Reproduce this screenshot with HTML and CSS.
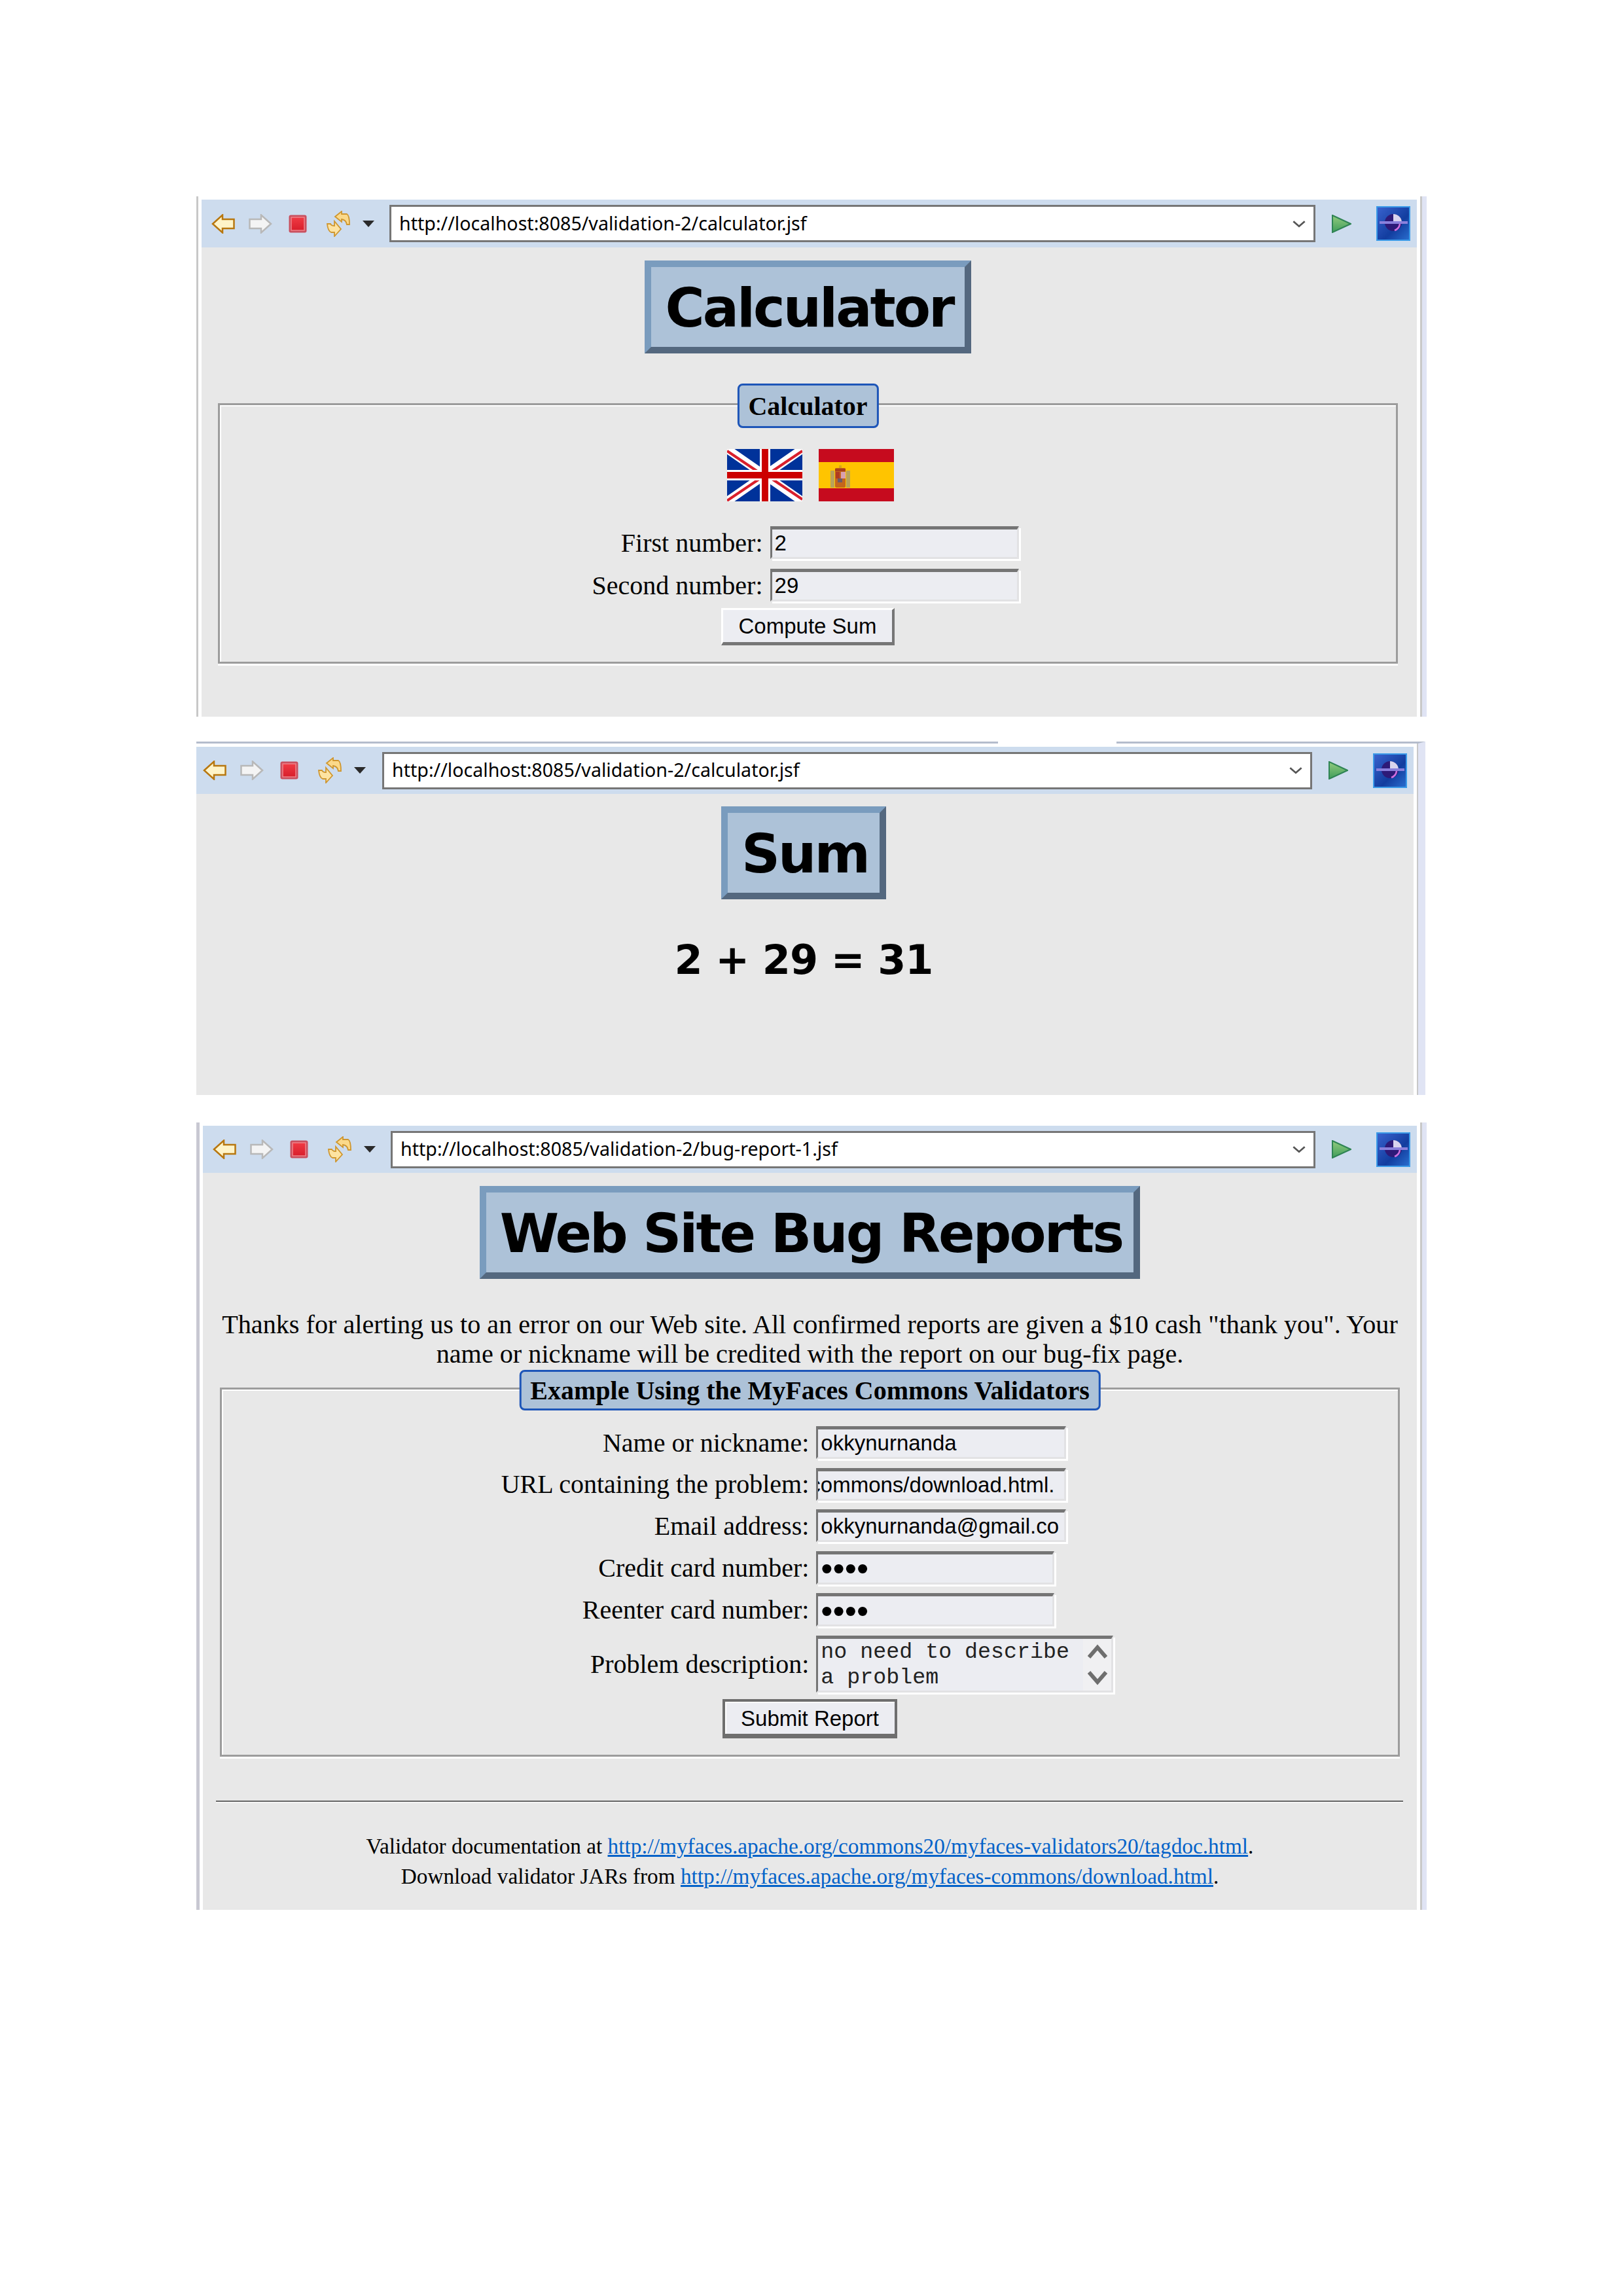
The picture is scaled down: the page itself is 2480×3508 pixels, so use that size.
FILE: index.html
```html
<!DOCTYPE html>
<html lang="en">
<head>
    <meta charset="UTF-8">
    <title>Validation screenshots</title>
    <link rel="stylesheet" href="styles.css">
</head>
<body>
    <svg class="defs" width="0" height="0">
        <defs>
            <linearGradient id="go-fill" x1="0" y1="0" x2="0" y2="1">
                <stop offset="0" stop-color="#93cb7e"/>
                <stop offset="1" stop-color="#3f9d5a"/>
            </linearGradient>
            <linearGradient id="stop-fill" x1="0" y1="0" x2="0" y2="1">
                <stop offset="0" stop-color="#f03a44"/>
                <stop offset="1" stop-color="#d81f2c"/>
            </linearGradient>
            <linearGradient id="eclipse-bg" x1="0" y1="0" x2="1" y2="1">
                <stop offset="0" stop-color="#3a63cf"/>
                <stop offset=".6" stop-color="#123d9f"/>
                <stop offset="1" stop-color="#2a6fd0"/>
            </linearGradient>
            <symbol id="ico-back" viewBox="0 0 36 30">
                <path d="M2 15 L17 1.5 V8 H34.500 V22 H17 V28.500 Z" fill="#fff4c8" stroke="#b8770f" stroke-width="2.5"/>
            </symbol>
            <symbol id="ico-fwd" viewBox="0 0 36 30">
                <path d="M34 15 L19 1.5 V8 H1.500 V22 H19 V28.500 Z" fill="#f4f4f4" stroke="#b8b8b8" stroke-width="2.5"/>
            </symbol>
            <symbol id="ico-stop" viewBox="0 0 28 28">
                <rect x="0.500" y="0.500" width="27" height="27" rx="3" fill="#c9505f"/>
                <rect x="4" y="4" width="20" height="20" fill="url(#stop-fill)" stroke="#f0838b" stroke-width="1.500"/>
            </symbol>
            <symbol id="ico-refresh" viewBox="0 0 36 40">
                <path d="M13 9 L23 1 V5 H31 Q35 7 35 21 H31 Q30 14 23 13 V17 Z" fill="#fbd98a" stroke="#cf962e" stroke-width="1.800"/>
                <path d="M22 28 L12 39 V33 H7 Q2 31 1 20 H6 Q7 23 12 23 V16 Z" fill="#fde3a2" stroke="#cf962e" stroke-width="1.800"/>
            </symbol>
            <symbol id="ico-go" viewBox="0 0 30 28">
                <path d="M1 1 L29 14 L1 27 Z" fill="url(#go-fill)" stroke="#2f8454" stroke-width="2"/>
            </symbol>
            <symbol id="ico-ext" viewBox="0 0 52 53">
                <rect x="1" y="1" width="50" height="51" fill="url(#eclipse-bg)" stroke="#3a9ae8" stroke-width="2"/>
                <circle cx="26" cy="25" r="13" fill="#2d1a78"/>
                <path d="M26 12 A13 13 0 0 1 39 25 H26 Z" fill="#d9d4ee"/>
                <path d="M36 27 A12 12 0 0 1 28 37" fill="none" stroke="#d070e0" stroke-width="2.5"/>
                <rect x="5" y="23" width="43" height="4" fill="#8a80dc"/>
            </symbol>
        </defs>
    </svg>

    <!-- calculator page -->
    <section class="window win-calc">
        <div class="toolbar">
            <svg class="ico ico-arrow"><use href="#ico-back"/></svg>
            <svg class="ico ico-arrow ico-fwd"><use href="#ico-fwd"/></svg>
            <svg class="ico ico-stop"><use href="#ico-stop"/></svg>
            <svg class="ico ico-refresh"><use href="#ico-refresh"/></svg>
            <span class="caret"></span>
            <div class="url"><span>http://localhost:8085/validation-2/calculator.jsf</span><svg class="chevron" viewBox="0 0 20 12"><path d="M2 2 L10 9 L18 2" fill="none" stroke="#555" stroke-width="2.5"/></svg></div>
            <svg class="ico ico-go"><use href="#ico-go"/></svg>
            <svg class="ico ico-ext"><use href="#ico-ext"/></svg>
        </div>
        <div class="page">
            <h1 class="title">Calculator</h1>
            <div class="fieldset fs-calc">
                <div class="legend">Calculator</div>
                <div class="flags">
                    <svg class="flag" viewBox="0 0 115 80" preserveAspectRatio="none">
                        <rect width="115" height="80" fill="#00329a"/>
                        <path d="M0 0 L115 80 M115 0 L0 80" stroke="#fff" stroke-width="13"/>
                        <path d="M0 3 L52 38 M115 3 L63 38 M0 79 L52 44 M115 77 L63 42" stroke="#d9202c" stroke-width="4"/>
                        <path d="M58 0 V80 M0 40 H115" stroke="#fff" stroke-width="16"/>
                        <path d="M58 0 V80 M0 40 H115" stroke="#cc0000" stroke-width="10"/>
                    </svg>
                    <svg class="flag" viewBox="0 0 115 80" preserveAspectRatio="none">
                        <rect width="115" height="80" fill="#c60b1e"/>
                        <rect y="20" width="115" height="40" fill="#ffc400"/>
                        <rect x="18" y="33" width="6" height="26" fill="#b9a25a"/>
                        <rect x="42" y="33" width="6" height="26" fill="#b9a25a"/>
                        <rect x="31" y="25" width="4" height="5" fill="#d8a818"/>
                        <rect x="25" y="29" width="16" height="30" rx="2" fill="#c4661c"/>
                        <rect x="25" y="30" width="16" height="4" fill="#a8401c"/>
                        <rect x="26" y="35" width="6" height="10" fill="#b03a20"/>
                        <rect x="34" y="35" width="7" height="10" fill="#d8a0b0"/>
                        <rect x="29" y="45" width="7" height="6" fill="#6c5a68"/>
                    </svg>
                </div>
                <div class="form">
                    <label>First number:</label><div class="field f-calc">2</div>
                    <label>Second number:</label><div class="field f-calc">29</div>
                </div>
                <div class="btn-row"><button class="btn btn-calc">Compute Sum</button></div>
            </div>
        </div>
    </section>

    <!-- sum result page -->
    <section class="window win-sum">
        <div class="toolbar">
            <svg class="ico ico-arrow"><use href="#ico-back"/></svg>
            <svg class="ico ico-arrow ico-fwd"><use href="#ico-fwd"/></svg>
            <svg class="ico ico-stop"><use href="#ico-stop"/></svg>
            <svg class="ico ico-refresh"><use href="#ico-refresh"/></svg>
            <span class="caret"></span>
            <div class="url"><span>http://localhost:8085/validation-2/calculator.jsf</span><svg class="chevron" viewBox="0 0 20 12"><path d="M2 2 L10 9 L18 2" fill="none" stroke="#555" stroke-width="2.5"/></svg></div>
            <svg class="ico ico-go"><use href="#ico-go"/></svg>
            <svg class="ico ico-ext"><use href="#ico-ext"/></svg>
        </div>
        <div class="page">
            <h1 class="title">Sum</h1>
            <div class="result">2 + 29 = 31</div>
        </div>
    </section>

    <!-- bug report page -->
    <section class="window win-bug">
        <div class="toolbar">
            <svg class="ico ico-arrow"><use href="#ico-back"/></svg>
            <svg class="ico ico-arrow ico-fwd"><use href="#ico-fwd"/></svg>
            <svg class="ico ico-stop"><use href="#ico-stop"/></svg>
            <svg class="ico ico-refresh"><use href="#ico-refresh"/></svg>
            <span class="caret"></span>
            <div class="url"><span>http://localhost:8085/validation-2/bug-report-1.jsf</span><svg class="chevron" viewBox="0 0 20 12"><path d="M2 2 L10 9 L18 2" fill="none" stroke="#555" stroke-width="2.5"/></svg></div>
            <svg class="ico ico-go"><use href="#ico-go"/></svg>
            <svg class="ico ico-ext"><use href="#ico-ext"/></svg>
        </div>
        <div class="page">
            <h1 class="title">Web Site Bug Reports</h1>
            <p class="intro">Thanks for alerting us to an error on our Web site. All confirmed reports are given a $10 cash "thank you". Your<br>name or nickname will be credited with the report on our bug-fix page.</p>
            <div class="fieldset fs-bug">
                <div class="legend">Example Using the MyFaces Commons Validators</div>
                <div class="form">
                    <label>Name or nickname:</label><div class="field f-text">okkynurnanda</div>
                    <label>URL containing the problem:</label><div class="field f-text f-clip"><span>commons/download.html.</span></div>
                    <label>Email address:</label><div class="field f-text">okkynurnanda@gmail.co</div>
                    <label>Credit card number:</label><div class="field f-pass">&#8226;&#8226;&#8226;&#8226;</div>
                    <label>Reenter card number:</label><div class="field f-pass">&#8226;&#8226;&#8226;&#8226;</div>
                    <label>Problem description:</label>
                    <div class="field f-area">
                        <div class="area-text">no need to describe<br>a problem</div>
                        <div class="area-bar">
                            <svg viewBox="0 0 30 23"><path d="M2 20 L15 5 L28 20" fill="none" stroke="#6e6e6e" stroke-width="6"/></svg>
                            <svg viewBox="0 0 30 23"><path d="M2 3 L15 18 L28 3" fill="none" stroke="#6e6e6e" stroke-width="6"/></svg>
                        </div>
                    </div>
                </div>
                <div class="btn-row"><button class="btn btn-bug">Submit Report</button></div>
            </div>
            <hr class="rule">
            <div class="notes">
                Validator documentation at <a href="#">http://myfaces.apache.org/commons20/myfaces-validators20/tagdoc.html</a>.<br>
                Download validator JARs from <a href="#">http://myfaces.apache.org/myfaces-commons/download.html</a>.
            </div>
        </div>
    </section>
</body>
</html>
```

FILE: styles.css
```css
body {
    margin: 0;
    padding: 300px 300px 0;
    width: 1880px;
    background: #fff;
    font-family: "Liberation Serif", serif;
    color: #000;
}

.defs {
    position: absolute;
}

.window {
    box-sizing: border-box;
    display: flex;
    flex-direction: column;
    border-left: 3px solid #c8c8c8;
    border-right: 7px solid #e0e4f4;
    box-shadow: inset -3px 0 0 #c8c8c8;
    padding-left: 5px;
    padding-top: 5px;
    width: 1880px;
}

.win-calc {
    height: 795px;
}

.win-sum {
    position: relative;
    width: 1878px;
    height: 540px;
    margin-top: 38px;
    border-left: 0;
    border-top: 3px solid #b4bccc;
    border-right-width: 11px;
    box-shadow: inset -2px 0 0 #c8c8c8;
    padding-left: 0;
}

/* white gap in the top line of this capture */
.win-sum::before {
    content: "";
    position: absolute;
    top: -3px;
    left: 1225px;
    width: 181px;
    height: 3px;
    background: #fff;
}

.win-bug {
    height: 1203px;
    margin-top: 42px;
    border-left: 5px solid #c8c8d2;
}

.toolbar {
    display: flex;
    align-items: center;
    height: 73px;
    flex: none;
    background: #cddcee;
    padding-left: 15px;
    margin-right: 8px;
}

.win-sum .toolbar {
    height: 72px;
    padding-left: 10px;
    margin-right: 7px;
}

.win-bug .toolbar {
    height: 72px;
}

.page {
    flex: 1;
    background: #e8e8e8;
    margin-right: 8px;
    padding: 20px 29px 0 25px;
}

.win-sum .page {
    margin-right: 7px;
    padding-top: 19px;
}

.win-bug .page {
    padding: 20px 26px 0;
}

.ico {
    flex: none;
    display: block;
}

.ico-arrow {
    width: 36px;
    height: 30px;
    margin-right: 21px;
}

.ico-fwd {
    margin-right: 25px;
}

.ico-stop {
    width: 28px;
    height: 28px;
    margin-right: 30px;
}

.ico-refresh {
    width: 36px;
    height: 40px;
    margin-right: 19px;
}

.caret {
    flex: none;
    width: 0;
    height: 0;
    border-left: 9px solid transparent;
    border-right: 9px solid transparent;
    border-top: 10px solid #2a2a2a;
    margin-right: 23px;
}

.win-sum .caret {
    margin-right: 25px;
}

.url {
    flex: 1;
    box-sizing: border-box;
    height: 57px;
    display: flex;
    align-items: center;
    justify-content: space-between;
    background: #fff;
    border: 3px solid #767676;
    padding: 0 11px 3px 12px;
    font-family: "Noto Sans", sans-serif;
    font-size: 28.6px;
}

.chevron {
    width: 22px;
    height: 13px;
    flex: none;
    margin-top: 4px;
}

.ico-go {
    width: 30px;
    height: 28px;
    margin-left: 25px;
}

.ico-ext {
    width: 52px;
    height: 53px;
    margin-left: 38px;
    margin-right: 10px;
}

.title {
    box-sizing: border-box;
    width: fit-content;
    height: 142px;
    margin: 0 auto;
    padding: 3px 17px 0 21px;
    display: flex;
    align-items: center;
    background: #adc2d8;
    border: 10px solid #7a9cbe;
    border-bottom-color: #54687f;
    border-right-color: #54687f;
    font-family: "DejaVu Sans", sans-serif;
    font-size: 82px;
    font-weight: bold;
    letter-spacing: -3px;
}

.fieldset {
    box-sizing: border-box;
    position: relative;
    border: 3px solid #9c9c9c;
    box-shadow: 0 3px 0 #fff, inset 2px 2px 0 #fff;
}

.fs-calc {
    height: 398px;
    margin-top: 76px;
    padding-top: 67px;
}

.legend {
    position: absolute;
    top: -33px;
    left: 50%;
    transform: translateX(-50%);
    box-sizing: border-box;
    height: 68px;
    display: flex;
    align-items: center;
    padding: 0 14px;
    white-space: nowrap;
    background: #adc2d8;
    border: 3px solid #1d55b8;
    border-radius: 8px;
    font-size: 40px;
    font-weight: bold;
}

.flags {
    display: flex;
    justify-content: center;
    gap: 25px;
    height: 80px;
    padding-left: 7px;
}

.flag {
    width: 115px;
    height: 80px;
    display: block;
}

.form {
    display: grid;
    grid-template-columns: max-content max-content;
    justify-content: center;
    align-items: center;
    column-gap: 11px;
    row-gap: 15px;
    margin-top: 38px;
    padding-right: 8px;
    font-size: 40px;
}

.form label {
    text-align: right;
}

.field {
    box-sizing: border-box;
    display: flex;
    align-items: center;
    overflow: hidden;
    white-space: nowrap;
    background: #ecedf2;
    border: 3px solid #e2e2e4;
    border-top: 5px solid #757575;
    border-left-color: #757575;
    box-shadow: 3px 3px 0 #fff;
    padding-left: 4px;
    font-family: "Liberation Sans", sans-serif;
    font-size: 33px;
}

.f-calc {
    width: 380px;
    height: 50px;
}

.btn-row {
    display: flex;
    justify-content: center;
}

.btn {
    box-sizing: border-box;
    font-family: "Liberation Sans", sans-serif;
    font-size: 33px;
    color: #000;
    background: #ecedf2;
    padding: 0;
}

.btn-calc {
    width: 265px;
    height: 57px;
    margin-top: 10px;
    border: 3px solid #fff;
    border-right: 4px solid #767676;
    border-bottom: 5px solid #767676;
}

.result {
    margin-top: 56px;
    text-align: center;
    font-family: "DejaVu Sans", sans-serif;
    font-size: 62px;
    font-weight: bold;
    letter-spacing: -1px;
}

.intro {
    margin: 47px -10px 0;
    text-align: center;
    font-size: 40.2px;
    line-height: 45px;
}

.fs-bug {
    height: 564px;
    margin-top: 29px;
    padding-top: 56px;
}

.fs-bug .form {
    margin-top: 0;
    row-gap: 13.5px;
}

.fs-bug .legend {
    top: -30px;
    height: 62px;
}

.f-text {
    width: 382px;
    height: 50px;
}

.f-clip span {
    margin-left: -17px;
}

.f-pass {
    width: 364px;
    height: 51px;
    overflow: visible;
    font-size: 52px;
    line-height: 40px;
}

.f-area {
    width: 454px;
    height: 87px;
    justify-content: space-between;
}

.area-text {
    padding-top: 2px;
    font-family: "Liberation Mono", monospace;
    font-size: 33.3px;
    line-height: 39px;
    color: #222;
}

.area-bar {
    display: flex;
    flex-direction: column;
    justify-content: center;
    gap: 17px;
    width: 43px;
    height: 100%;
    flex: none;
    align-items: center;
    background: #f0f0f2;
}

.area-bar svg {
    width: 30px;
    height: 23px;
    display: block;
}

.btn-bug {
    width: 267px;
    height: 60px;
    margin-top: 10px;
    padding-top: 3px;
    border: 4px solid #6e6e6e;
    border-bottom-width: 7px;
    box-shadow: inset 2px 2px 0 #fff;
}

.rule {
    height: 2px;
    margin: 67px -5px 0 -6px;
    border: 0;
    background: #666;
    box-shadow: 0 2px 0 #f6f6f6;
}

.notes {
    margin-top: 45px;
    text-align: center;
    font-size: 33.3px;
    line-height: 46px;
}

.notes a {
    color: #0563c9;
    text-decoration-thickness: 3px;
}
```
